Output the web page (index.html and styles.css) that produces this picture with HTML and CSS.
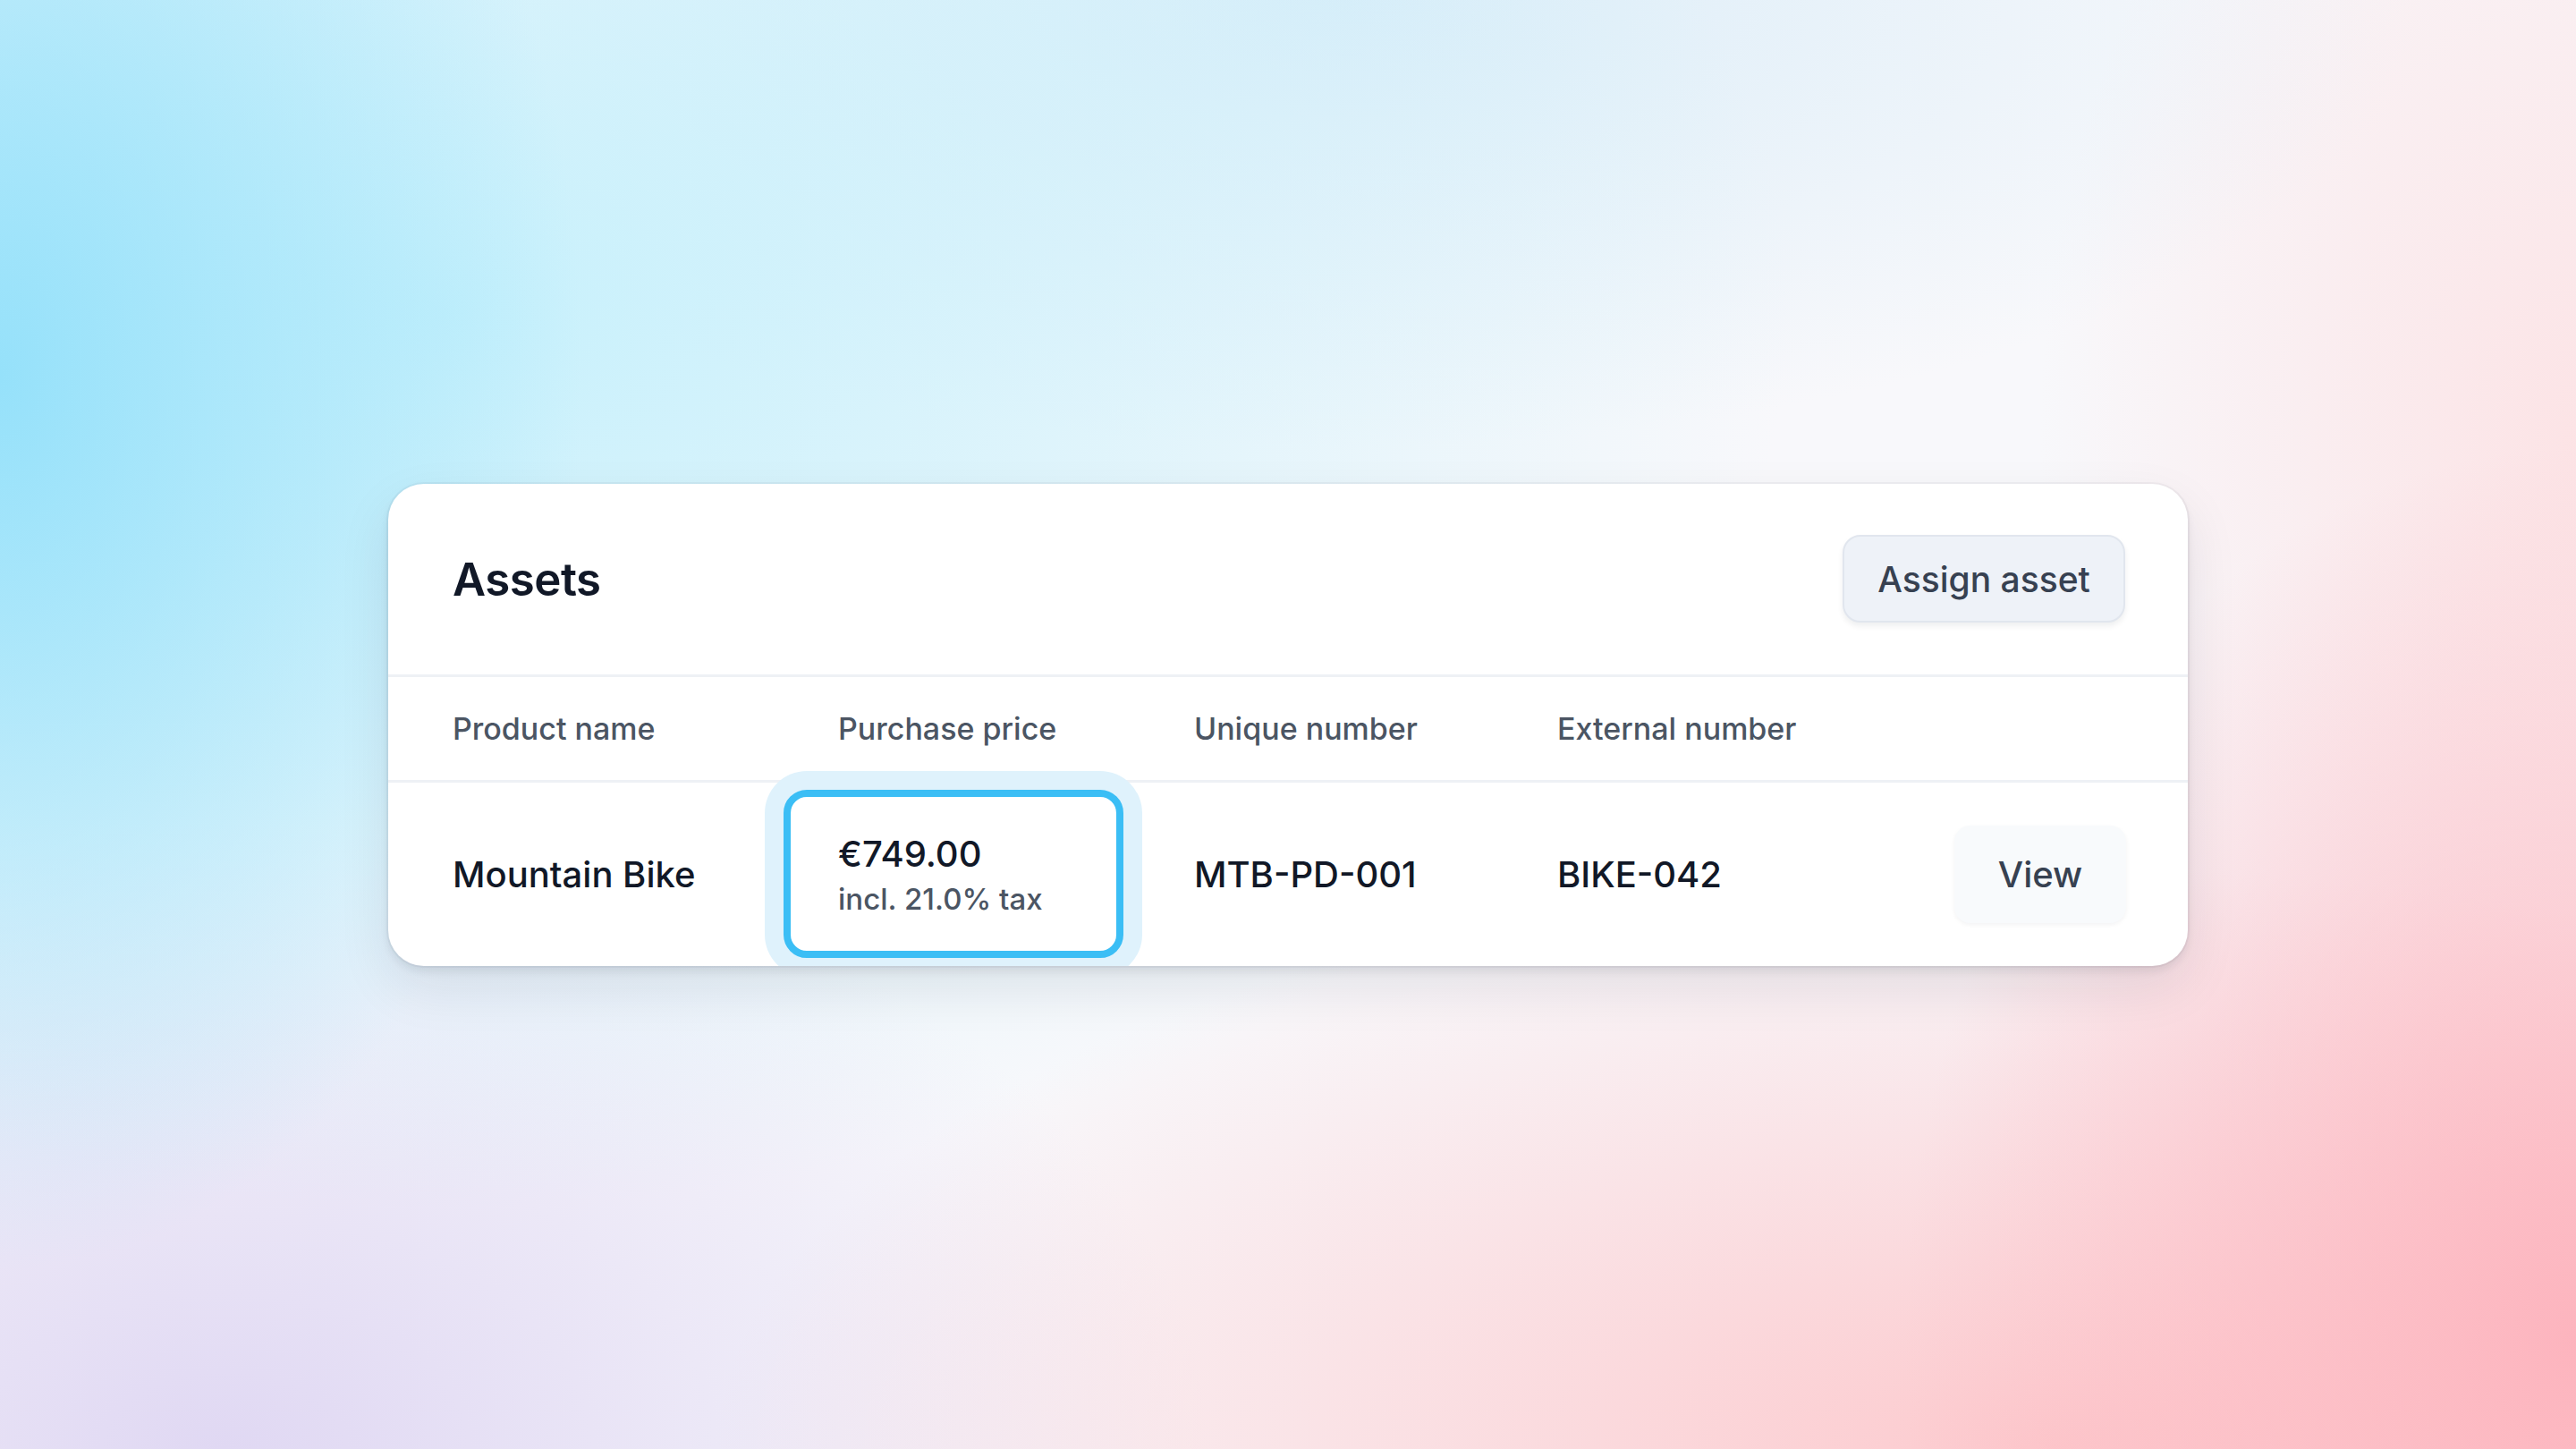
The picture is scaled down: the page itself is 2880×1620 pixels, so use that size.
FILE: index.html
```html
<!DOCTYPE html>
<html lang="en">
<head>
    <meta charset="UTF-8" />
    <meta name="viewport" content="width=device-width, initial-scale=1.0" />
    <title>Assets</title>
    <link rel="stylesheet" href="styles.css">
</head>
<body>
    <div class="card">
        <div class="cardHeader">
            <h2>Assets</h2>
            <button class="assignBtn">Assign asset</button>
        </div>
        <div class="row headRow">
            <div class="cell">Product name</div>
            <div class="cell priceHead">Purchase price</div>
            <div class="cell">Unique number</div>
            <div class="cell">External number</div>
            <div class="cell"></div>
        </div>
        <div class="row bodyRow">
            <div class="cell">Mountain Bike</div>
            <div class="cell">
                <div class="priceBox">
                    <span class="amount">€749.00</span>
                    <span class="tax">incl. 21.0% tax</span>
                </div>
            </div>
            <div class="cell">MTB-PD-001</div>
            <div class="cell">BIKE-042</div>
            <div class="cell actions">
                <button class="viewBtn">View</button>
            </div>
        </div>
    </div>
</body>
</html>
```

FILE: styles.css
```css
html, body {
    height: 100%;
}
body {
    margin: 0;
    font-family: Inter, "Noto Sans", sans-serif;
    color: #111827;
    display: flex;
    align-items: center;
    justify-content: center;
    background:
        radial-gradient(ellipse 650px 1000px at 0px 420px, rgba(146, 224, 250, 0.95), rgba(146, 224, 250, 0) 100%),
        radial-gradient(ellipse 1500px 1000px at 500px 350px, rgba(196, 240, 252, 0.95), rgba(196, 240, 252, 0) 100%),
        radial-gradient(ellipse 1200px 500px at 1500px 0px, rgba(216, 236, 248, 0.9), rgba(216, 236, 248, 0) 100%),
        radial-gradient(ellipse 750px 1000px at 2880px 1500px, rgba(253, 178, 188, 0.95), rgba(253, 178, 188, 0) 100%),
        radial-gradient(ellipse 1500px 650px at 2300px 1620px, rgba(253, 196, 200, 0.9), rgba(253, 196, 200, 0) 100%),
        radial-gradient(ellipse 600px 900px at 2880px 500px, rgba(253, 222, 224, 0.8), rgba(253, 222, 224, 0) 100%),
        radial-gradient(ellipse 1100px 700px at 250px 1620px, rgba(224, 216, 243, 1), rgba(224, 216, 243, 0) 100%),
        #f8f8fb;
}
.card {
    width: 2012px;
    background: #ffffff;
    border-radius: 40px;
    overflow: hidden;
    box-shadow: 0 0 0 2px rgba(15, 23, 42, 0.04), 0 6px 10px rgba(15, 23, 42, 0.08), 0 24px 60px rgba(15, 23, 42, 0.09);
}
.cardHeader {
    height: 213px;
    display: flex;
    align-items: center;
    justify-content: space-between;
    padding: 0 70px 0 72px;
    border-bottom: 3px solid #eef1f5;
}
.cardHeader h2 {
    margin: 0;
    font-size: 51px;
    font-weight: 600;
    letter-spacing: -0.5px;
}
.assignBtn {
    width: 316px;
    height: 98px;
    background: #eef2f8;
    border: 2px solid #e1e6ee;
    border-radius: 20px;
    box-shadow: 0 4px 6px rgba(15, 23, 42, 0.07);
    font-family: inherit;
    font-size: 39px;
    font-weight: 500;
    color: #374151;
}
.row {
    display: grid;
    grid-template-columns: 370px 459px 406px 1fr auto;
    align-items: center;
    padding: 0 69px 0 72px;
}
.headRow {
    height: 115px;
    border-bottom: 3px solid #eef1f5;
    font-size: 34px;
    color: #4b5563;
    font-weight: 500;
}
.priceHead {
    padding-left: 61px;
}
.bodyRow {
    height: 205px;
    font-size: 40px;
    font-weight: 500;
}
.priceBox {
    width: 380px;
    height: 188px;
    box-sizing: border-box;
    border: 8px solid #3bbef5;
    border-radius: 26px;
    box-shadow: 0 0 0 21px #dff2fc;
    padding: 0 53px;
    display: flex;
    flex-direction: column;
    justify-content: center;
    gap: 6px;
    background: #ffffff;
}
.amount {
    font-size: 40px;
    font-weight: 500;
}
.tax {
    font-size: 33px;
    font-weight: 500;
    color: #4b5563;
}
.actions {
    display: flex;
    justify-content: flex-end;
}
.viewBtn {
    width: 192px;
    height: 109px;
    background: #f8fafc;
    border: none;
    border-radius: 18px;
    box-shadow: 0 2px 5px rgba(15, 23, 42, 0.05);
    font-family: inherit;
    font-size: 40px;
    font-weight: 500;
    color: #374151;
}
```
